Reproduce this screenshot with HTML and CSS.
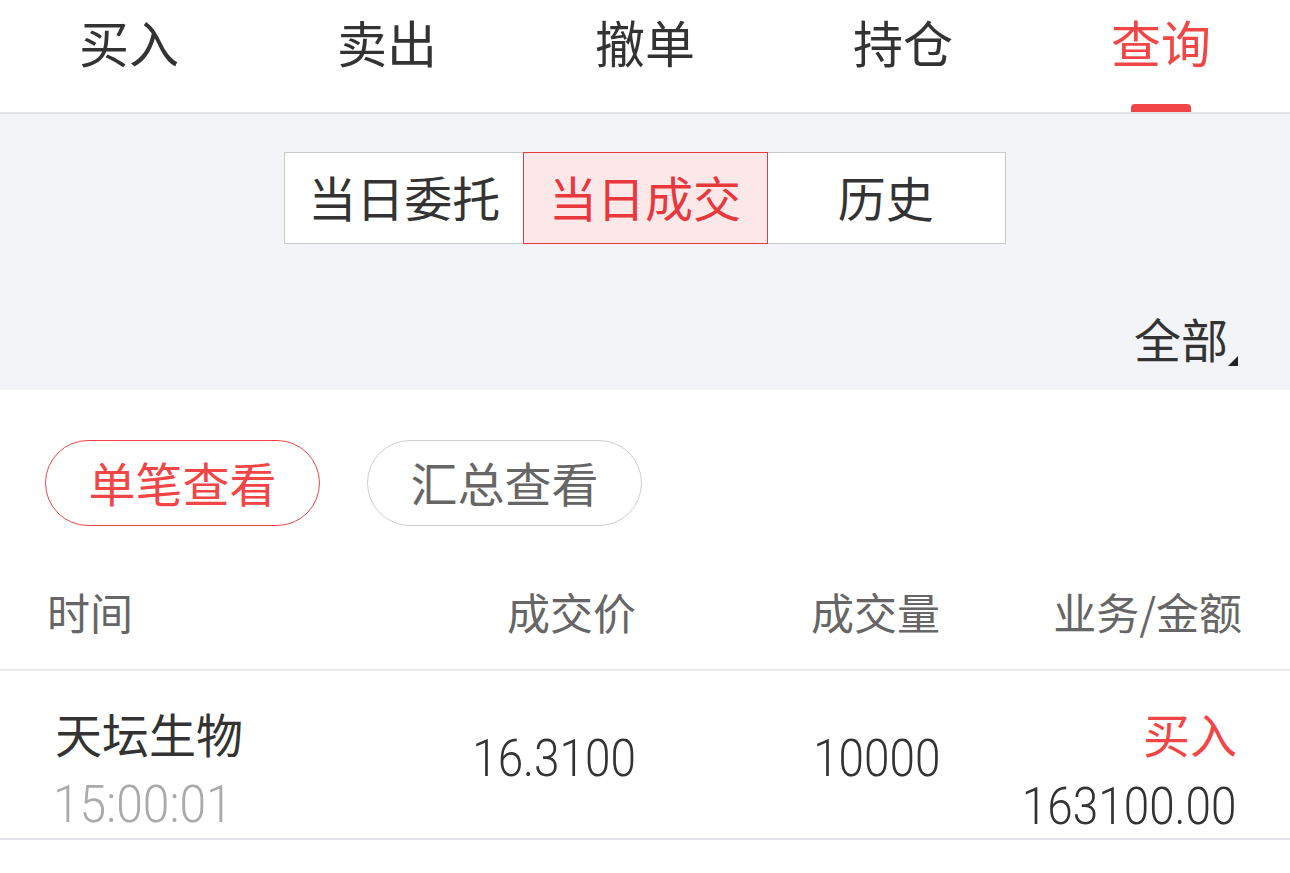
FILE: index.html
```html
<!DOCTYPE html>
<html lang="zh">
<head>
<meta charset="utf-8">
<link rel="stylesheet" href="styles.css">
</head>
<body>
<nav class="tabs">
  <div class="tab">买入</div>
  <div class="tab">卖出</div>
  <div class="tab">撤单</div>
  <div class="tab">持仓</div>
  <div class="tab active">查询</div>
</nav>
<section class="filter">
  <div class="seg">
    <div class="seg-item">当日委托</div>
    <div class="seg-item on">当日成交</div>
    <div class="seg-item">历史</div>
  </div>
  <div class="all-row"><span class="all">全部</span></div>
</section>
<section class="pills">
  <div class="pill on">单笔查看</div>
  <div class="pill">汇总查看</div>
</section>
<div class="grid head">
  <div class="c1">时间</div>
  <div class="cr">成交价</div>
  <div class="cr">成交量</div>
  <div class="cr">业务/金额</div>
</div>
<div class="grid row">
  <div class="c1 stack">
    <div class="name">天坛生物</div>
    <div class="time"><span class="dig left">15:00:01</span></div>
  </div>
  <div class="cr mid"><span class="dig">16.3100</span></div>
  <div class="cr mid"><span class="dig">10000</span></div>
  <div class="cr stack last">
    <div class="buy">买入</div>
    <div class="amt"><span class="dig">163100.00</span></div>
  </div>
</div>
</body>
</html>
```

FILE: styles.css
```css
* { box-sizing: border-box; margin: 0; padding: 0; }
body {
  width: 1290px;
  background: #fff;
  font-family: "Noto Sans CJK SC", "Noto Sans", sans-serif;
  color: #333;
}
.tabs {
  display: flex;
  height: 114px;
  border-bottom: 2px solid #e4e5ea;
  background: #fff;
}
.tab {
  flex: 1;
  position: relative;
  text-align: center;
  font-size: 50px;
  line-height: 82px;
  color: #333;
}
.tab.active { color: #f24646; }
.tab.active::after {
  content: "";
  position: absolute;
  left: 50%;
  bottom: 0;
  width: 60px;
  margin-left: -30px;
  height: 8px;
  border-radius: 4px 4px 0 0;
  background: #f24646;
}
.filter {
  background: #f3f4f8;
  height: 276px;
  padding-top: 38px;
}
.seg {
  display: flex;
  width: 722px;
  height: 92px;
  margin-left: 284px;
  border: 1px solid #c9c9cc;
  background: #fff;
}
.seg-item {
  flex: 1;
  display: flex;
  align-items: center;
  justify-content: center;
  font-size: 48px;
  padding-bottom: 4px;
  color: #333;
}
.seg-item.on {
  color: #e8383d;
  background: #fde8e9;
  outline: 1px solid #e53d3d;
  flex: 0 0 243px;
}
.all-row {
  display: flex;
  justify-content: flex-end;
  padding-right: 62px;
  margin-top: 64px;
}
.all {
  position: relative;
  font-size: 47px;
  line-height: 60px;
  color: #333;
}
.all::after {
  content: "";
  position: absolute;
  right: -10px;
  bottom: 2px;
  width: 0;
  height: 0;
  border-left: 10px solid transparent;
  border-bottom: 10px solid #222;
}
.pills {
  display: flex;
  gap: 47px;
  padding: 50px 0 0 45px;
}
.pill {
  width: 275px;
  height: 86px;
  border: 1.5px solid #cfcfcf;
  border-radius: 43px;
  display: flex;
  align-items: center;
  justify-content: center;
  font-size: 47px;
  padding-bottom: 4px;
  color: #666;
}
.pill.on {
  border-color: #f24646;
  color: #f24646;
}
.grid {
  display: grid;
  grid-template-columns: 1fr 300px 304px 302px;
  padding: 0 48px 0 47px;
}
.head {
  height: 145px;
  align-items: end;
  padding-bottom: 32px;
  border-bottom: 2px solid #e8e8e8;
  font-size: 43px;
  line-height: 52px;
  color: #666;
}
.cr { text-align: right; }
.row {
  height: 169px;
  border-bottom: 2px solid #e2e3ea;
  padding-top: 26px;
  align-items: start;
}
.stack { line-height: 72px; }
.last { padding-right: 5px; }
.name { font-size: 47px; color: #333; padding-left: 8px; }
.time { color: #aaa; padding-left: 6px; }
.dig {
  display: inline-block;
  font-family: Roboto, "Noto Sans", sans-serif;
  font-weight: 300;
  font-size: 51px;
  transform: scaleX(0.9);
  transform-origin: right center;
}
.dig.left { transform-origin: left center; transform: scaleX(0.94); }
.mid { line-height: 72px; margin-top: 26px; color: #333; }
.amt { color: #333; margin-top: 2px; }
.buy { font-size: 47px; color: #f24646; }
```
